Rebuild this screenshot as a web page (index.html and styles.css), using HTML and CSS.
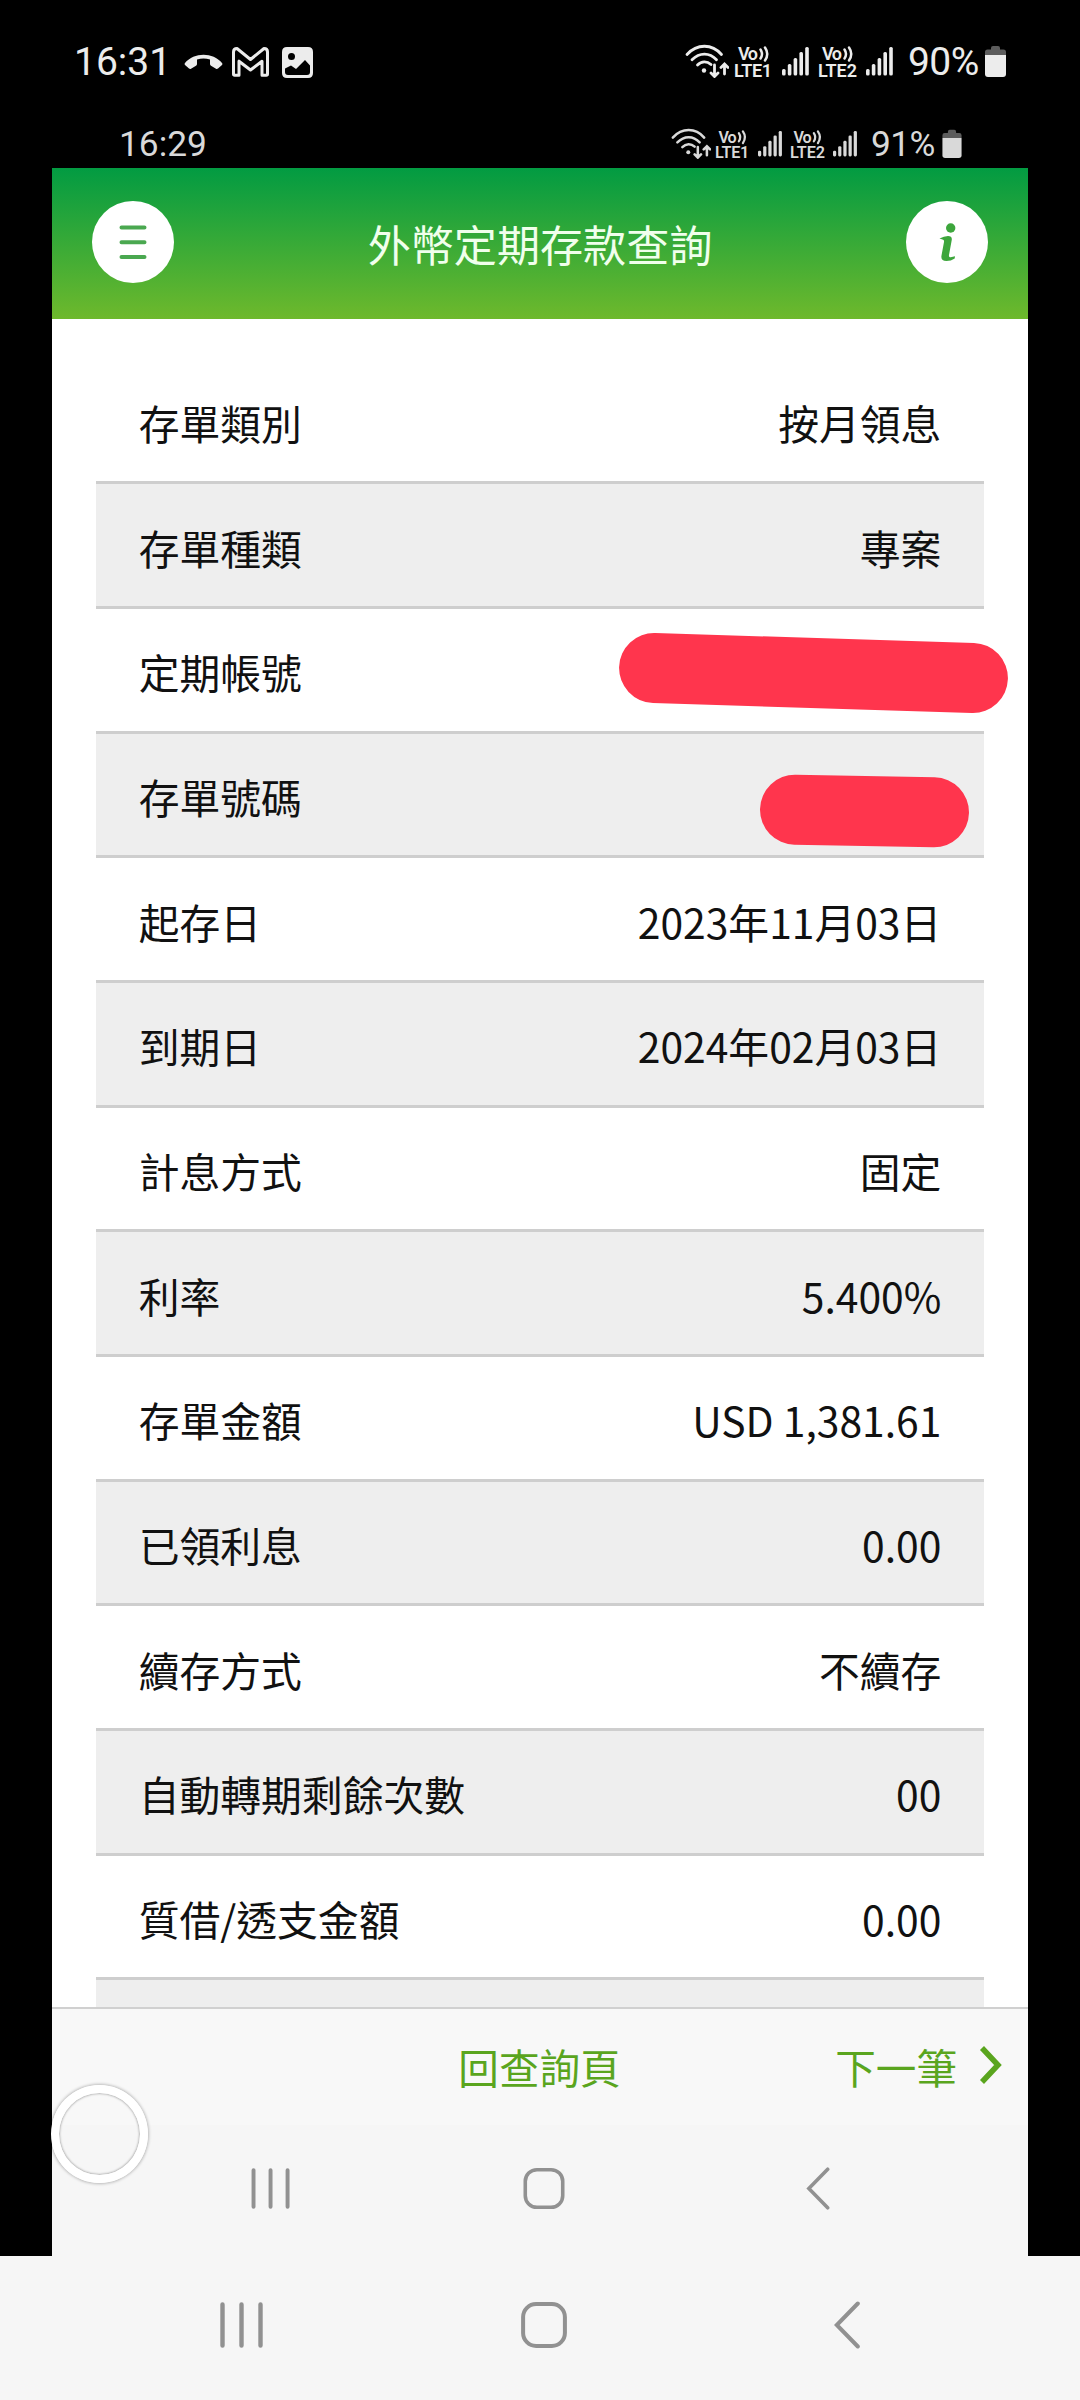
FILE: index.html
```html
<!DOCTYPE html>
<html lang="zh-Hant">
<head>
    <meta charset="UTF-8">
    <meta name="viewport" content="width=device-width, initial-scale=1.0">
    <title>外幣定期存款查詢</title>
    <link rel="stylesheet" href="styles.css">
</head>
<body>
    <!-- shared icons -->
    <svg class="defs" width="0" height="0">
        <symbol id="wifi" viewBox="0 0 44 34">
            <g fill="none" stroke="currentColor" stroke-width="2.8" stroke-linecap="round">
                <path d="M2 10.500C12-.5 27-.5 36.500 10.500"/>
                <path d="M7 15.800C14.500 8.200 24.500 8.200 31.500 15.800"/>
                <path d="M12.500 21C16.500 16.800 22 16.800 26 20.500"/>
                <path d="M29.500 21V32M26 29l3.500 3.500L33 29M39.500 30V20.500M36 23.500l3.500-3.500L43 23.500"/>
            </g>
            <circle cx="19" cy="26.500" r="2.200" fill="currentColor"/>
        </symbol>
        <symbol id="signal" viewBox="0 0 28 34">
            <g fill="currentColor">
                <rect x="0" y="25" width="3.600" height="6.500" rx="1.500"/>
                <rect x="5.800" y="20" width="3.600" height="11.500" rx="1.500"/>
                <rect x="11.600" y="14" width="3.600" height="17.500" rx="1.500"/>
                <rect x="17.400" y="8" width="3.600" height="23.500" rx="1.500"/>
                <rect x="23.200" y="3" width="3.600" height="28.500" rx="1.500"/>
            </g>
        </symbol>
        <symbol id="battery" viewBox="0 0 21 34">
            <path d="M0 11V8q0-2.500 2.500-2.500H6V4q0-2 2-2h5q2 0 2 2v1.500h3.500Q21 5.500 21 8v3z" fill="#5c5c5c"/>
            <path d="M0 11h21v19q0 3-3 3H3q-3 0-3-3z" fill="currentColor"/>
        </symbol>
        <symbol id="recents" viewBox="0 0 44 48">
            <path d="M2.500 3.500v41M21.500 3.500v41M40.500 3.500v41" fill="none" stroke="currentColor" stroke-width="4.400" stroke-linecap="round"/>
        </symbol>
        <symbol id="home" viewBox="0 0 46 48">
            <rect x="2.100" y="3" width="41.800" height="42" rx="13" fill="none" stroke="currentColor" stroke-width="4"/>
        </symbol>
        <symbol id="back" viewBox="0 0 26 48">
            <path d="M23.800 2.500L2.800 24l21 21.500" fill="none" stroke="currentColor" stroke-width="4" stroke-linecap="round"/>
        </symbol>
    </svg>

    <div class="phone">
        <div class="status">
            <span class="time">16:31</span>
            <svg class="ic-call" viewBox="0 0 39 16"><path d="M1 9C10-2 29-2 38 9q.8 1 0 2l-4 3.500q-1 .8-2 .2l-5-3q-1-.6-1-1.600V5.500Q19.500 3.500 13 5.500v4.600q0 1-1 1.600l-5 3q-1 .6-2-.2L1 11q-.8-1 0-2z" fill="currentColor"/></svg>
            <svg class="ic-mail" viewBox="0 0 37 30"><path d="M1.500 27V5Q1.500 1.500 5 1.500L18.500 12.500 32 1.500Q35.500 1.500 35.500 5V27q0 1.200-1.200 1.200H30V14.200L18.500 23 7 14.200V28.200H2.700Q1.500 28.200 1.500 27z" fill="none" stroke="currentColor" stroke-width="3" stroke-linejoin="round"/></svg>
            <svg class="ic-photo" viewBox="0 0 31 31"><path fill-rule="evenodd" d="M5 0h21q5 0 5 5v21q0 5-5 5H5q-5 0-5-5V5q0-5 5-5zM9.500 6a3.500 3.500 0 1 0 0 7 3.500 3.500 0 1 0 0-7zM3 21.500V25q0 3 3 3h19q3 0 3-3v-6.500L23 13l-9 9-5-3.500z" fill="currentColor"/></svg>
            <div class="indicators">
                <svg class="ic-wifi"><use href="#wifi"/></svg>
                <svg class="ic-lte" viewBox="0 0 40 34">
                    <text x="4" y="16" textLength="20">Vo</text>
                    <path d="M26.500 5.500q3 4.500 0 9M31 3.500q4.500 6.500 0 13"/>
                    <text x="0" y="33" textLength="38">LTE1</text>
                </svg>
                <svg class="ic-signal"><use href="#signal"/></svg>
                <svg class="ic-lte" viewBox="0 0 40 34">
                    <text x="4" y="16" textLength="20">Vo</text>
                    <path d="M26.500 5.500q3 4.500 0 9M31 3.500q4.500 6.500 0 13"/>
                    <text x="0" y="33" textLength="39">LTE2</text>
                </svg>
                <svg class="ic-signal"><use href="#signal"/></svg>
                <span class="percent">90%</span>
                <svg class="ic-battery"><use href="#battery"/></svg>
            </div>
        </div>

        <div class="screen">
            <div class="status status-inner">
                <span class="time">16:29</span>
                <div class="indicators">
                    <svg class="ic-wifi"><use href="#wifi"/></svg>
                    <svg class="ic-lte" viewBox="0 0 40 34">
                        <text x="4" y="16" textLength="20">Vo</text>
                        <path d="M26.500 5.500q3 4.500 0 9M31 3.500q4.500 6.500 0 13"/>
                        <text x="0" y="33" textLength="38">LTE1</text>
                    </svg>
                    <svg class="ic-signal"><use href="#signal"/></svg>
                    <svg class="ic-lte" viewBox="0 0 40 34">
                        <text x="4" y="16" textLength="20">Vo</text>
                        <path d="M26.500 5.500q3 4.500 0 9M31 3.500q4.500 6.500 0 13"/>
                        <text x="0" y="33" textLength="39">LTE2</text>
                    </svg>
                    <svg class="ic-signal"><use href="#signal"/></svg>
                    <span class="percent">91%</span>
                    <svg class="ic-battery"><use href="#battery"/></svg>
                </div>
            </div>

            <header class="header">
                <button class="round-btn" aria-label="menu">
                    <svg viewBox="0 0 82 82"><path d="M29.500 26.500h23M29.500 41.200h23M29.500 56h23" stroke="#4aa850" stroke-width="4" stroke-linecap="round"/></svg>
                </button>
                <h1>外幣定期存款查詢</h1>
                <button class="round-btn" aria-label="info">
                    <svg viewBox="0 0 82 82"><circle cx="44.700" cy="27" r="4.700" fill="#3da63c"/><path d="M33.500 37.500Q38 35 42 35q4.500 0 3.700 4.200L43 54q-.4 2.400 1.700 2.200l4.300-.9-.3 2.200Q45 60 40.500 60q-6 0-5-5.500L38 41q.4-2.300-1.500-2.500z" fill="#3da63c"/></svg>
                </button>
            </header>

            <main class="content">
                <div class="row"><span>存單類別</span><span>按月領息</span></div>
                <div class="row"><span>存單種類</span><span>專案</span></div>
                <div class="row"><span>定期帳號</span><i class="mask mask-account"></i></div>
                <div class="row"><span>存單號碼</span><i class="mask mask-number"></i></div>
                <div class="row"><span>起存日</span><span>2023年11月03日</span></div>
                <div class="row"><span>到期日</span><span>2024年02月03日</span></div>
                <div class="row"><span>計息方式</span><span>固定</span></div>
                <div class="row"><span>利率</span><span>5.400%</span></div>
                <div class="row"><span>存單金額</span><span>USD 1,381.61</span></div>
                <div class="row"><span>已領利息</span><span>0.00</span></div>
                <div class="row"><span>續存方式</span><span>不續存</span></div>
                <div class="row"><span>自動轉期剩餘次數</span><span>00</span></div>
                <div class="row"><span>質借/透支金額</span><span>0.00</span></div>
                <div class="row"></div>
            </main>

            <footer class="footer">
                <a class="back-link">回查詢頁</a>
                <a class="next-link">下一筆
                    <svg viewBox="0 0 24 40"><path d="M3 3l16 17L3 37" fill="none" stroke="#5aa51e" stroke-width="5.500"/></svg>
                </a>
            </footer>

            <nav class="nav nav-inner">
                <svg class="ic-recents"><use href="#recents"/></svg>
                <svg class="ic-home"><use href="#home"/></svg>
                <svg class="ic-back"><use href="#back"/></svg>
            </nav>
            <div class="assist"></div>
        </div>

        <nav class="nav">
            <svg class="ic-recents"><use href="#recents"/></svg>
            <svg class="ic-home"><use href="#home"/></svg>
            <svg class="ic-back"><use href="#back"/></svg>
        </nav>
    </div>
</body>
</html>
```

FILE: styles.css
```css
* {
    margin: 0;
    padding: 0;
    box-sizing: border-box;
}

body {
    background-color: #000;
    font-family: "Noto Sans CJK TC", sans-serif;
}

svg {
    display: block;
    flex-shrink: 0;
}

.defs {
    position: absolute;
}

.phone {
    width: 1080px;
    height: 2400px;
    display: flex;
    flex-direction: column;
    background-color: #000;
    overflow: hidden;
}

/* status bars */
.status {
    height: 87px;
    padding: 44px 74px 0 74px;
    display: flex;
    align-items: flex-start;
    color: #ececec;
    font-family: Roboto, sans-serif;
    font-size: 39px;
    line-height: 36px;
}

.time {
    width: 110px;
}

.ic-call {
    width: 39px;
    height: 16px;
    margin-top: 10px;
}

.ic-mail {
    width: 37px;
    height: 30px;
    margin: 3px 13px 0 9px;
}

.ic-photo {
    width: 31px;
    height: 31px;
    margin-top: 3px;
}

.indicators {
    display: flex;
    margin-left: auto;
}

.ic-wifi {
    width: 44px;
    height: 34px;
}

.ic-lte {
    width: 40px;
    height: 34px;
    margin: 0 8px 0 5px;
    overflow: visible;
}

.ic-lte text {
    font-family: Roboto, sans-serif;
    font-size: 18px;
    font-weight: 600;
    fill: currentColor;
}

.ic-lte path {
    fill: none;
    stroke: currentColor;
    stroke-width: 2.5;
    stroke-linecap: round;
}

.ic-signal {
    width: 28px;
    height: 34px;
    margin-right: 3px;
}

.ic-battery {
    width: 21px;
    height: 34px;
}

.percent {
    width: 78px;
    margin-left: 11px;
    margin-right: -1px;
    letter-spacing: -0.6px;
}

.screen {
    position: relative;
    width: 976px;
    height: 2169px;
    margin-left: 52px;
    display: flex;
    flex-direction: column;
}

.status-inner {
    height: 81px;
    padding: 41px 66px 0 67px;
    color: #d9d9d9;
    font-size: 35.3px;
    line-height: 33px;
}

.status-inner .ic-wifi {
    width: 40px;
    height: 31px;
}

.status-inner .ic-lte {
    width: 36px;
    height: 31px;
    margin: 0 7px 0 4px;
}

.status-inner .ic-signal {
    width: 25px;
    height: 31px;
}

.status-inner .percent {
    width: 72px;
    margin-left: 10px;
}

.status-inner .ic-battery {
    width: 20px;
    height: 31px;
}

/* title bar */
.header {
    height: 151px;
    padding: 0 40px;
    display: flex;
    align-items: center;
    justify-content: space-between;
    background: linear-gradient(#029b42, #6eb92c);
}

.header h1 {
    color: #f0ffec;
    font-size: 43.1px;
    font-weight: 400;
    line-height: 60px;
    padding-bottom: 1px;
}

.round-btn {
    width: 82px;
    height: 82px;
    margin-bottom: 3px;
    border: none;
    border-radius: 50%;
    background-color: #fff;
}

/* deposit details */
.content {
    height: 1688px;
    padding: 40.5px 43.7px 0;
    background-color: #fff;
    overflow: hidden;
}

.row {
    position: relative;
    height: 124.7px;
    padding: 5px 43px 0;
    display: flex;
    align-items: center;
    justify-content: space-between;
    border-bottom: 3px solid #cecece;
    color: #111;
    font-size: 40.8px;
    line-height: 60px;
}

.row:nth-child(even) {
    background-color: #eee;
}

.mask {
    position: absolute;
    height: 70px;
    border-radius: 35px;
    background-color: #ff354d;
}

.mask-account {
    top: 29px;
    right: -23.5px;
    width: 389px;
    transform: rotate(1.8deg);
}

.mask-number {
    top: 42px;
    right: 15.3px;
    width: 209px;
    transform: rotate(1.1deg);
}

.footer {
    height: 118px;
    padding: 0 25px 0 0;
    display: grid;
    grid-template-columns: 1fr auto 1fr;
    align-items: center;
    border-top: 2px solid #d0d0d0;
    background-color: #f8f8f8;
    color: #5aa51e;
    font-size: 40.6px;
    line-height: 60px;
}

.back-link {
    grid-column: 2;
    margin-left: 24px;
}

.next-link {
    display: flex;
    align-items: center;
    justify-content: flex-end;
    gap: 22px;
}

.next-link svg {
    width: 24px;
    height: 40px;
    margin-bottom: 4px;
}

/* navigation bars */
.nav {
    height: 144px;
    padding: 0 220px 6px 220px;
    display: flex;
    align-items: center;
    justify-content: space-between;
    background-color: #f6f6f6;
    color: #919191;
}

.nav-inner {
    height: 131px;
    padding: 0 198px 4px 199px;
}

.ic-recents {
    width: 44px;
    height: 48px;
}

.ic-home {
    width: 46px;
    height: 48px;
    margin-right: 10px;
}

.ic-back {
    width: 26px;
    height: 48px;
}

.nav-inner .ic-recents {
    width: 40px;
    height: 43px;
}

.nav-inner .ic-home {
    width: 42px;
    height: 43px;
}

.nav-inner .ic-back {
    width: 24px;
    height: 43px;
}

/* floating assist button */
.assist {
    position: absolute;
    left: -1.5px;
    top: 1998px;
    width: 97px;
    height: 98px;
    border: 8px solid #fff;
    border-radius: 50%;
    box-shadow: 0 0 3px 1px rgba(0, 0, 0, 0.25), inset 0 0 2px 1px rgba(0, 0, 0, 0.25);
}
```
